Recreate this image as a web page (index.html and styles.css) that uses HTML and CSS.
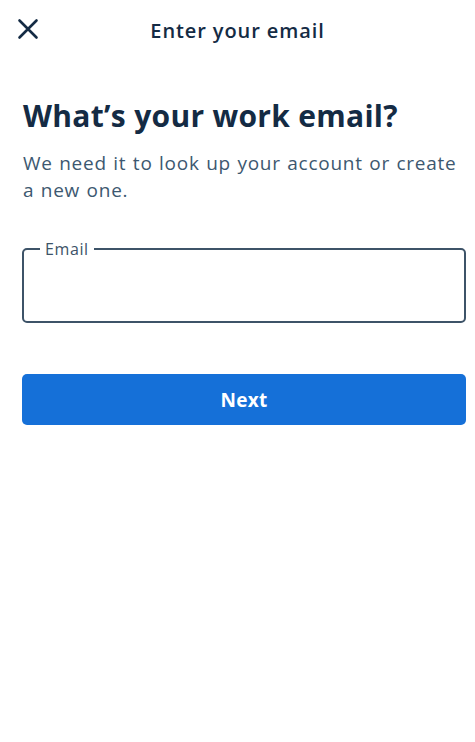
FILE: index.html
```html
<html>

<head>
  <title>Enter your email</title>
  <link rel="stylesheet" href="styles.css">
</head>

<body>
  <header class="topbar">
    <button class="close" aria-label="Close">
      <svg width="22" height="22" viewBox="0 0 22 22">
        <path d="M2.5 2.5 L19.5 19.5 M19.5 2.5 L2.5 19.5" stroke="#142b44" stroke-width="2.6" stroke-linecap="round" fill="none"/>
      </svg>
    </button>
    <div class="topbar-title">Enter your email</div>
  </header>

  <main class="content">
    <h1 class="heading">What’s your work email?</h1>
    <p class="lead">We need it to look up your account or create a new one.</p>

    <fieldset class="field">
      <legend>Email</legend>
      <input class="field-input" type="email">
    </fieldset>

    <button class="next">Next</button>
  </main>
</body>

</html>
```

FILE: styles.css
```css
html {
  font-family: "Open Sans", "Noto Sans", sans-serif;
  color: #142b44;
}

body {
  margin: 0;
  background: #fff;
}

.topbar {
  position: relative;
  height: 60px;
  display: flex;
  align-items: center;
  justify-content: center;
}

.close {
  position: absolute;
  left: 17px;
  top: 18px;
  border: 0;
  background: none;
  padding: 0;
  width: 22px;
  height: 22px;
}

.topbar-title {
  font-size: 20px;
  font-weight: 600;
  letter-spacing: 0.9px;
}

.content {
  padding: 36px 9px 0 22px;
}

.heading {
  margin: 0 0 0 1px;
  font-size: 30px;
  font-weight: 700;
  line-height: 40px;
  letter-spacing: 0.3px;
}

.lead {
  margin: 14px 0 0 1px;
  font-size: 19px;
  line-height: 27px;
  letter-spacing: 0.75px;
  word-spacing: 0.8px;
  color: #3d5870;
}

.field {
  margin: 34px 0 0;
  height: 85px;
  box-sizing: border-box;
  border: 2px solid #3d5368;
  border-radius: 5px;
  padding: 0 12px;
}

.field legend {
  font-size: 16px;
  color: #3d5368;
  padding: 0 5px;
  margin-left: 4px;
  letter-spacing: 0.6px;
}

.field-input {
  border: 0;
  outline: none;
  width: 100%;
  height: 50px;
  font-size: 18px;
  background: none;
}

.next {
  display: block;
  width: 100%;
  margin: 51px 0 0;
  height: 51px;
  border: 0;
  border-radius: 5px;
  background: #1570d8;
  color: #fff;
  font-family: inherit;
  font-size: 19px;
  font-weight: 700;
  letter-spacing: 0.3px;
}
```
